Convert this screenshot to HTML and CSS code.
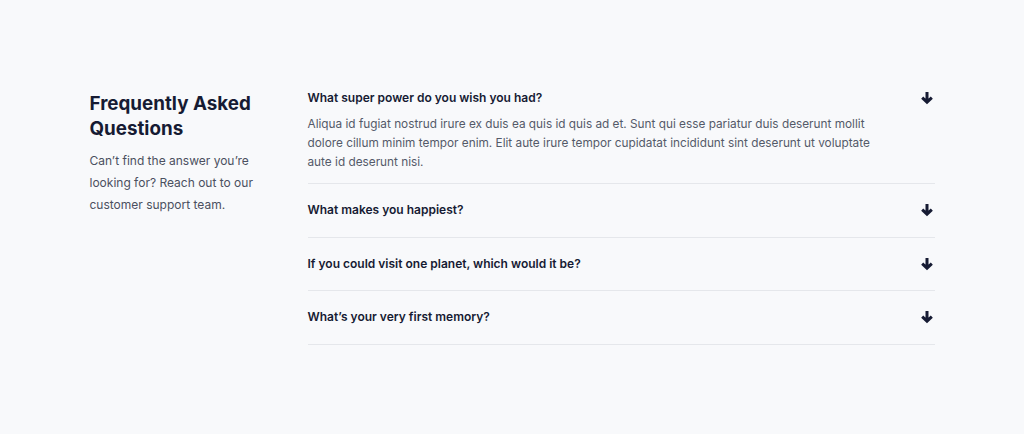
FILE: index.html
```html
<!DOCTYPE html>
<html lang="en">
<head>
    <meta charset="UTF-8">
    <meta name="viewport" content="width=device-width, initial-scale=1.0">
    <title>FAQ</title>
    <link rel="stylesheet" href="styles.css">
</head>
<body>

    <section class="faq">
        <div class="faq-intro">
            <h2>Frequently Asked Questions</h2>
            <p>Can’t find the answer you’re looking for? Reach out to our customer support team.</p>
        </div>

        <div class="faq-list">
            <div class="faq-item open">
                <div class="faq-question">
                    <span>What super power do you wish you had?</span>
                    <svg class="arrow" viewBox="0 0 14 14"><path d="M7 1v10.5M2.2 6.6L7 11.2l4.8-4.6"/></svg>
                </div>
                <p class="faq-answer">Aliqua id fugiat nostrud irure ex duis ea quis id quis ad et. Sunt qui esse pariatur duis deserunt mollit dolore cillum minim tempor enim. Elit aute irure tempor cupidatat incididunt sint deserunt ut voluptate aute id deserunt nisi.</p>
            </div>

            <div class="faq-item">
                <div class="faq-question">
                    <span>What makes you happiest?</span>
                    <svg class="arrow" viewBox="0 0 14 14"><path d="M7 1v10.5M2.2 6.6L7 11.2l4.8-4.6"/></svg>
                </div>
            </div>

            <div class="faq-item">
                <div class="faq-question">
                    <span>If you could visit one planet, which would it be?</span>
                    <svg class="arrow" viewBox="0 0 14 14"><path d="M7 1v10.5M2.2 6.6L7 11.2l4.8-4.6"/></svg>
                </div>
            </div>

            <div class="faq-item">
                <div class="faq-question">
                    <span>What’s your very first memory?</span>
                    <svg class="arrow" viewBox="0 0 14 14"><path d="M7 1v10.5M2.2 6.6L7 11.2l4.8-4.6"/></svg>
                </div>
            </div>
        </div>
    </section>

</body>
</html>
```

FILE: styles.css
```css
body{
    font-family: Inter, "Noto Sans", sans-serif;
    background-color: #f8f9fb;
    color: #161b33;
    margin: 0;
}

.faq{
    max-width: 845px;
    margin: 0 auto;
    padding: 88px 0 0;
    display: grid;
    grid-template-columns: 190px 1fr;
    column-gap: 28px;
}

.faq-intro h2{
    margin: 3px 0 0;
    font-size: 18.8px;
    line-height: 25px;
    font-weight: 700;
    color: #161b33;
}

.faq-intro p{
    margin: 9px 0 0;
    font-size: 12px;
    line-height: 22px;
    color: #4b5060;
}

.faq-item{
    padding: 16px 0 16.5px;
    border-bottom: 1px solid #e5e7eb;
}

.faq-item:first-child{
    padding-top: 0;
    padding-bottom: 11px;
}

.faq-question{
    display: flex;
    justify-content: space-between;
    align-items: center;
    font-size: 12px;
    line-height: 20px;
    font-weight: 600;
    color: #161b33;
}

.arrow{
    width: 14px;
    height: 14px;
    margin-right: 1px;
    fill: none;
    stroke: #161b33;
    stroke-width: 3;
}

.faq-answer{
    margin: 7px 0 0;
    padding-right: 40px;
    font-size: 11.8px;
    line-height: 19px;
    color: #545a69;
}
```
